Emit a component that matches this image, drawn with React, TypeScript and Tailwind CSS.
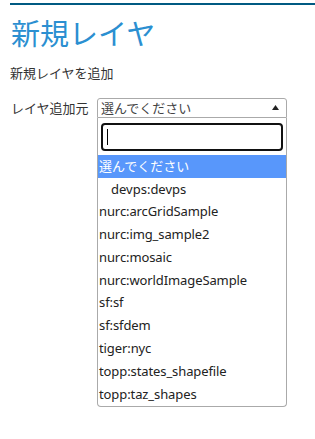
const layers = [
  "nurc:arcGridSample",
  "nurc:img_sample2",
  "nurc:mosaic",
  "nurc:worldImageSample",
  "sf:sf",
  "sf:sfdem",
  "tiger:nyc",
  "topp:states_shapefile",
  "topp:taz_shapes",
];

export default function App() {
  return (
    <div
      className="min-h-[439px] bg-white pl-[10px] text-[#333]"
      style={{ fontFamily: '"Noto Sans", "Noto Sans CJK JP", sans-serif' }}
    >
      <div className="pt-[3px]">
        <div className="h-[2px] bg-[#005a82]" />
      </div>
      <h1 className="mt-[12px] pl-[1px] text-[29px] leading-[34px] font-normal text-[#2b8fd1]">新規レイヤ</h1>
      <p className="mt-[12px] text-[13px] leading-[20px]">新規レイヤを追加</p>

      <div className="mt-[15px] flex items-start">
        <label className="w-[87px] pl-[1px] text-[13px] leading-[20px]">レイヤ追加元</label>
        <div className="relative w-[190px]">
          <div className="flex h-[20px] items-center justify-between rounded-t-[3px] border border-[#aaa] bg-white pl-[3px] pr-[7px]">
            <span className="text-[13px] leading-[18px] text-[#444]">選んでください</span>
            <svg width="7" height="5" viewBox="0 0 7 5" className="mb-[1px]">
              <polygon points="0,5 7,5 3.5,0" fill="#222" />
            </svg>
          </div>
          <div className="absolute top-full left-0 w-full rounded-b-[4px] border border-t-0 border-[#aaa] bg-white">
            <div className="px-[3px] pt-[5px] pb-[4px]">
              <div className="flex h-[28px] items-center rounded-[4px] border-2 border-[#111] px-[4px]">
                <div className="h-[16px] w-[1px] bg-black" />
              </div>
            </div>
            <ul className="text-[13px] text-[#222]">
              <li className="flex h-[23px] items-center bg-[#5897fb] pl-[1px] text-white">選んでください</li>
              <li className="flex h-[22.6px] items-center pl-[13px]">devps:devps</li>
              {layers.map((l) => (
                <li key={l} className="flex h-[22.8px] items-center pl-[1px] tracking-[-0.1px]">
                  {l}
                </li>
              ))}
            </ul>
          </div>
        </div>
      </div>
    </div>
  );
}
